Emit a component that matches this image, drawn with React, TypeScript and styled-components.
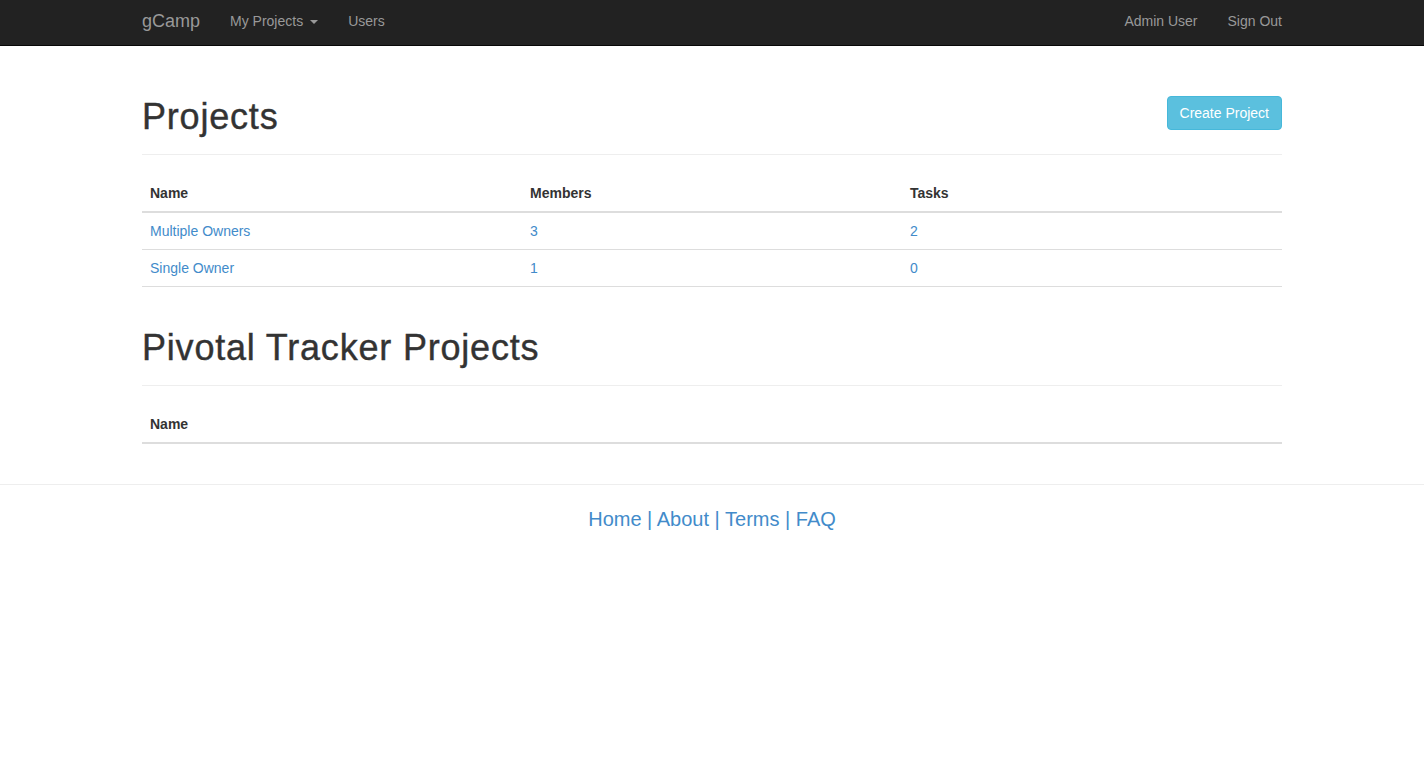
import React from "react";
import styled, { createGlobalStyle } from "styled-components";

const GlobalStyle = createGlobalStyle`
  * { box-sizing: border-box; }
  html, body { margin: 0; padding: 0; background: #fff; }
  body {
    font-family: "Liberation Sans", Arial, Helvetica, sans-serif;
    font-size: 14px;
    line-height: 20px;
    color: #333;
  }
`;

const Navbar = styled.nav`
  background: #222;
  border-bottom: 1px solid #080808;
  height: 46px;
`;

const NavContainer = styled.div`
  width: 1170px;
  margin: 0 auto;
  display: flex;
  align-items: flex-start;
`;

const Brand = styled.a`
  font-size: 18px;
  line-height: 20px;
  color: #999;
  padding: 11px 15px 14px;
  text-decoration: none;
`;

const NavList = styled.ul<{ $right?: boolean }>`
  list-style: none;
  margin: 0;
  padding: 0;
  display: flex;
  margin-left: ${(p) => (p.$right ? "auto" : "0")};
`;

const NavLink = styled.a`
  display: flex;
  align-items: center;
  font-size: 14px;
  line-height: 20px;
  color: #999;
  padding: 11px 15px 14px;
  text-decoration: none;
`;

const Caret = styled.span`
  display: inline-block;
  width: 0;
  height: 0;
  margin-left: 7px;
  margin-top: 1px;
  border-top: 4px solid #999;
  border-left: 4px solid transparent;
  border-right: 4px solid transparent;
`;

const Container = styled.main`
  width: 1140px;
  margin: 0 auto;
`;

const PageHeader = styled.div<{ $top: number }>`
  margin-top: ${(p) => p.$top}px;
  padding-bottom: 17px;
  border-bottom: 1px solid #eee;
  display: flex;
  justify-content: space-between;
  align-items: flex-start;
`;

const Title = styled.h1`
  margin: 0;
  padding-top: 3px;
  font-size: 36px;
  line-height: 40px;
  font-weight: 500;
  letter-spacing: 0.8px;
  -webkit-text-stroke: 0.4px #333;
  color: #333;
`;

const InfoButton = styled.a`
  margin-top: 2px;
  display: inline-block;
  padding: 6px 12px;
  font-size: 14px;
  line-height: 20px;
  color: #fff;
  background: #5bc0de;
  border: 1px solid #46b8da;
  border-radius: 4px;
  text-decoration: none;
`;

const Table = styled.table<{ $bottomBorder?: boolean }>`
  width: 100%;
  margin-top: 20px;
  border-collapse: collapse;
  table-layout: fixed;
  border-bottom: ${(p) => (p.$bottomBorder ? "1px solid #ddd" : "none")};
`;

const Th = styled.th`
  text-align: left;
  font-weight: bold;
  padding: 8px;
  line-height: 20px;
  border-bottom: 2px solid #ddd;
  color: #333;
`;

const Td = styled.td`
  padding: 8px;
  line-height: 20px;
  border-top: 1px solid #ddd;
`;

const Link = styled.a`
  color: #428bca;
  text-decoration: none;
`;

const Footer = styled.footer`
  margin-top: 40px;
  border-top: 1px solid #eee;
  padding-top: 22px;
  text-align: center;
  font-size: 20px;
  line-height: 24px;
  color: #428bca;
`;

const projects = [
  { name: "Multiple Owners", members: 3, tasks: 2 },
  { name: "Single Owner", members: 1, tasks: 0 },
];

export default function App() {
  return (
    <>
      <GlobalStyle />
      <Navbar>
        <NavContainer>
          <Brand href="#">gCamp</Brand>
          <NavList>
            <li>
              <NavLink href="#">
                My Projects
                <Caret />
              </NavLink>
            </li>
            <li>
              <NavLink href="#">Users</NavLink>
            </li>
          </NavList>
          <NavList $right>
            <li>
              <NavLink href="#">Admin User</NavLink>
            </li>
            <li>
              <NavLink href="#">Sign Out</NavLink>
            </li>
          </NavList>
        </NavContainer>
      </Navbar>
      <Container>
        <PageHeader $top={48}>
          <Title>Projects</Title>
          <InfoButton href="#">Create Project</InfoButton>
        </PageHeader>
        <Table $bottomBorder>
          <thead>
            <tr>
              <Th>Name</Th>
              <Th>Members</Th>
              <Th>Tasks</Th>
            </tr>
          </thead>
          <tbody>
            {projects.map((p) => (
              <tr key={p.name}>
                <Td>
                  <Link href="#">{p.name}</Link>
                </Td>
                <Td>
                  <Link href="#">{p.members}</Link>
                </Td>
                <Td>
                  <Link href="#">{p.tasks}</Link>
                </Td>
              </tr>
            ))}
          </tbody>
        </Table>
        <PageHeader $top={38}>
          <Title>Pivotal Tracker Projects</Title>
        </PageHeader>
        <Table>
          <thead>
            <tr>
              <Th>Name</Th>
            </tr>
          </thead>
          <tbody />
        </Table>
      </Container>
      <Footer>
        <Link href="#">Home</Link> | <Link href="#">About</Link> |{" "}
        <Link href="#">Terms</Link> | <Link href="#">FAQ</Link>
      </Footer>
    </>
  );
}
